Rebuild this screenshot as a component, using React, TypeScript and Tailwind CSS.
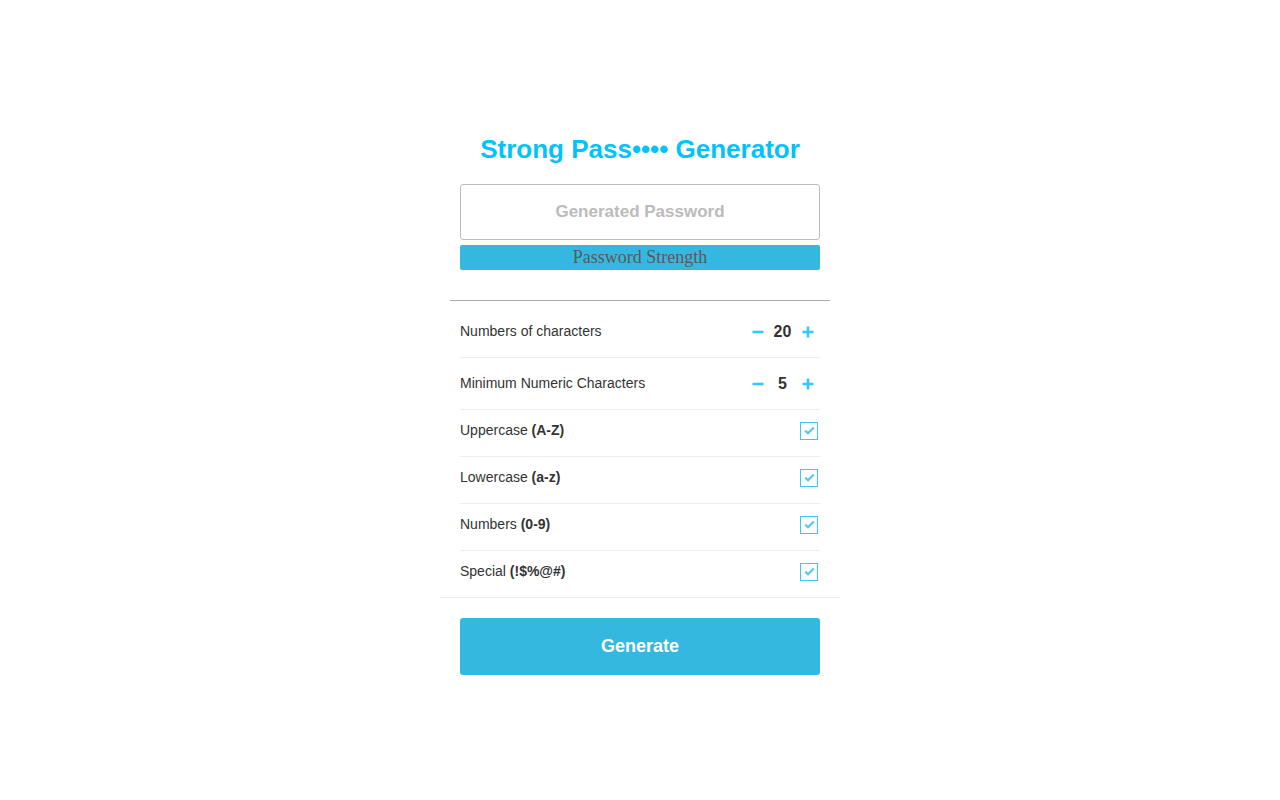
import { useState } from "react";

const options = [
  { key: "upper", label: "Uppercase", hint: "(A-Z)" },
  { key: "lower", label: "Lowercase", hint: "(a-z)" },
  { key: "numbers", label: "Numbers", hint: "(0-9)" },
  { key: "special", label: "Special", hint: "(!$%@#)" },
];

function Minus() {
  return (
    <svg width="12" height="12" viewBox="0 0 12 12">
      <path d="M0.5 6h11" stroke="#33c8ff" strokeWidth="2.6" />
    </svg>
  );
}

function Plus() {
  return (
    <svg width="12" height="12" viewBox="0 0 12 12">
      <path d="M0.5 6h11M6 0.5v11" stroke="#33c8ff" strokeWidth="2.6" />
    </svg>
  );
}

function Counter({ value, onChange }: { value: number; onChange: (v: number) => void }) {
  return (
    <div className="flex items-center">
      <button className="w-[25px] h-[25px] flex items-center justify-center" onClick={() => onChange(value - 1)}>
        <Minus />
      </button>
      <span className="w-[25px] text-center text-[16px] font-bold text-[#333] leading-none">{value}</span>
      <button className="w-[25px] h-[25px] flex items-center justify-center" onClick={() => onChange(value + 1)}>
        <Plus />
      </button>
    </div>
  );
}

function Check({ on, onClick }: { on: boolean; onClick: () => void }) {
  return (
    <button
      onClick={onClick}
      className="w-[18px] h-[18px] mr-[2px] border-[1.5px] border-[#3cc8f5] bg-white flex items-center justify-center"
    >
      {on && (
        <svg width="11" height="9" viewBox="0 0 11 9">
          <path d="M1.2 4.6l2.8 2.7L9.8 1.4" fill="none" stroke="#5cc6f0" strokeWidth="2.2" />
        </svg>
      )}
    </button>
  );
}

export default function App() {
  const [length, setLength] = useState(20);
  const [minNum, setMinNum] = useState(5);
  const [checked, setChecked] = useState<Record<string, boolean>>({
    upper: true, lower: true, numbers: true, special: true,
  });

  return (
    <div className="min-h-screen bg-white flex justify-center font-['Liberation_Sans',Arial,sans-serif]">
      <div className="w-[400px] pt-[131px]">
        <h1 className="text-center text-[26px] font-bold leading-[36px] text-[#00c3fc]">
          Strong Pass•••• Generator
        </h1>

        <div className="px-5 mt-[17px]">
          <div className="h-[56px] border border-[#bbb] rounded-[3px] flex items-center justify-center">
            <span className="text-[17px] font-bold text-[#bbb]">Generated Password</span>
          </div>
          <div className="mt-[5px] h-[25px] rounded-[2px] bg-[#35b8df] text-center leading-[25px] text-[18px] text-[#5a5a5a] font-['Liberation_Serif','Times_New_Roman',serif]">
            Password Strength
          </div>
        </div>

        <div className="mx-[10px] mt-[30px] border-t border-[#aaa]" />

        {/* Settings */}
        <div className="mt-[5px] border-b border-[#eee]">
          <div className="mx-5 h-[52px] flex items-center justify-between border-b border-[#eee]">
            <span className="text-[14px] text-[#333]">Numbers of characters</span>
            <Counter value={length} onChange={setLength} />
          </div>
          <div className="mx-5 h-[52px] flex items-center justify-between border-b border-[#eee]">
            <span className="text-[14px] text-[#333]">Minimum Numeric Characters</span>
            <Counter value={minNum} onChange={setMinNum} />
          </div>
          {options.map((o, i) => (
            <div
              key={o.key}
              className={`mx-5 pb-[5px] flex items-center justify-between ${
                i < options.length - 1 ? "h-[47px] border-b border-[#eee]" : "h-[46px]"
              }`}
            >
              <span className="text-[14px] text-[#333]">
                {o.label} <b>{o.hint}</b>
              </span>
              <Check on={checked[o.key]} onClick={() => setChecked({ ...checked, [o.key]: !checked[o.key] })} />
            </div>
          ))}
        </div>

        <div className="px-5 mt-[20px]">
          <button className="w-full h-[57px] rounded-[3px] bg-[#35b8df] text-white text-[18px] font-bold">
            Generate
          </button>
        </div>
      </div>
    </div>
  );
}
